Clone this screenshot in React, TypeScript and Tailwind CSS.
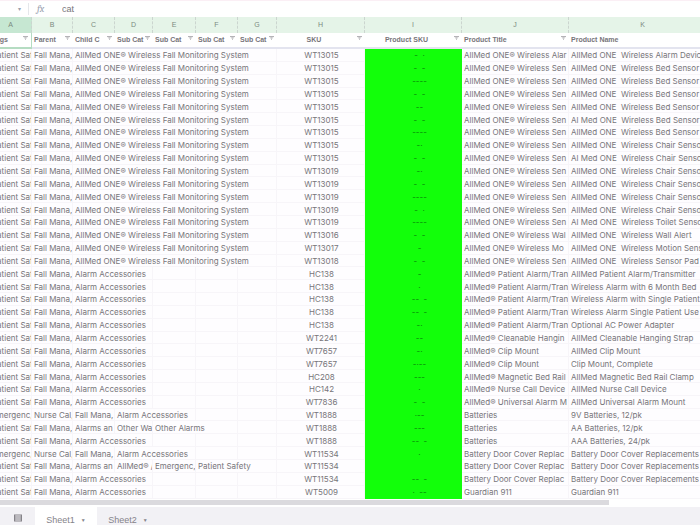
import clsx from 'clsx';

type Cell = { text: string; span?: number };

type Row = {
  cells: Cell[];
  sku: string;
  mark: string;
  title: string;
  name: string;
};

const SAFETY: Cell = { text: 'Patient Saf' };
const FALL: Cell = { text: 'Fall Mana,' };

const SYSTEM: Cell[] = [SAFETY, FALL, { text: 'AllMed ONE® Wireless Fall Monitoring System', span: 5 }];
const ACCESSORY: Cell[] = [SAFETY, FALL, { text: 'Alarm Accessories', span: 2 }, { text: '' }, { text: '' }, { text: '' }];
const EMERGENCY: Cell[] = [
  { text: 'Emergenc,' },
  { text: 'Nurse Cal,' },
  FALL,
  { text: 'Alarm Accessories', span: 2 },
  { text: '' },
  { text: '' },
];
const OTHER: Cell[] = [
  SAFETY,
  FALL,
  { text: 'Alarms an' },
  { text: 'Other War' },
  { text: 'Other Alarms', span: 2 },
  { text: '' },
];
const PATIENT: Cell[] = [
  SAFETY,
  FALL,
  { text: 'Alarms an' },
  { text: 'AllMed® /' },
  { text: 'Emergenc,' },
  { text: 'Patient Safety', span: 2 },
];

const row = (cells: Cell[], sku: string, mark: string, title: string, name: string): Row => ({
  cells,
  sku,
  mark,
  title,
  name,
});

const SENSOR = 'AllMed ONE® Wireless Sen';
const TRANSMITTER = 'AllMed® Patient Alarm/Tran';
const BATTERY_DOOR = 'Battery Door Cover Replac';

const rows: Row[] = [
  row(SYSTEM, 'WT13015', '-  ·', 'AllMed ONE® Wireless Alar', 'AllMed ONE  Wireless Alarm Device'),
  row(SYSTEM, 'WT13015', '-  -', SENSOR, 'AllMed ONE  Wireless Bed Sensor'),
  row(SYSTEM, 'WT13015', '----', SENSOR, 'AllMed ONE  Wireless Bed Sensor'),
  row(SYSTEM, 'WT13015', '-  -', SENSOR, 'AllMed ONE  Wireless Bed Sensor'),
  row(SYSTEM, 'WT13015', '--', SENSOR, 'AllMed ONE  Wireless Bed Sensor'),
  row(SYSTEM, 'WT13015', '-  -', SENSOR, 'Al Med ONE  Wireless Bed Sensor'),
  row(SYSTEM, 'WT13015', '----', SENSOR, 'AllMed ONE  Wireless Bed Sensor'),
  row(SYSTEM, 'WT13015', '-·', SENSOR, 'AllMed ONE  Wireless Chair Sensor'),
  row(SYSTEM, 'WT13015', '-  -', SENSOR, 'Al Med ONE  Wireless Chair Sensor'),
  row(SYSTEM, 'WT13019', '-·', SENSOR, 'AllMed ONE  Wireless Chair Sensor'),
  row(SYSTEM, 'WT13019', '-  -', SENSOR, 'AllMed ONE  Wireless Chair Sensor'),
  row(SYSTEM, 'WT13019', '----', SENSOR, 'AllMed ONE  Wireless Chair Sensor'),
  row(SYSTEM, 'WT13019', '-  ·', SENSOR, 'AllMed ONE  Wireless Chair Sensor'),
  row(SYSTEM, 'WT13019', '----', SENSOR, 'Al Med ONE  Wireless Toilet Sensor'),
  row(SYSTEM, 'WT13016', '-  -', 'AllMed ONE® Wireless Wal', 'AllMed ONE  Wireless Wall Alert'),
  row(SYSTEM, 'WT13017', '-', 'AllMed ONE® Wireless Mo', 'AllMed ONE  Wireless Motion Sensor'),
  row(SYSTEM, 'WT13018', '-  -', SENSOR, 'AllMed ONE  Wireless Sensor Pad'),
  row(ACCESSORY, 'HC138', '-', TRANSMITTER, 'AllMed Patient Alarm/Transmitter'),
  row(ACCESSORY, 'HC138', '·', TRANSMITTER, 'Wireless Alarm with 6 Month Bed'),
  row(ACCESSORY, 'HC138', '--  -', TRANSMITTER, 'Wireless Alarm with Single Patient'),
  row(ACCESSORY, 'HC138', '--  -', TRANSMITTER, 'Wireless Alarm Single Patient Use'),
  row(ACCESSORY, 'HC138', '-·', TRANSMITTER, 'Optional AC Power Adapter'),
  row(ACCESSORY, 'WT2241', '--', 'AllMed® Cleanable Hangin', 'AllMed Cleanable Hanging Strap'),
  row(ACCESSORY, 'WT7657', '-·', 'AllMed® Clip Mount', 'AllMed Clip Mount'),
  row(ACCESSORY, 'WT7657', '-·--', 'AllMed® Clip Mount', 'Clip Mount, Complete'),
  row(ACCESSORY, 'HC208', '---', 'AllMed® Magnetic Bed Rail', 'AllMed Magnetic Bed Rail Clamp'),
  row(ACCESSORY, 'HC142', '·', 'AllMed® Nurse Call Device', 'AllMed Nurse Call Device'),
  row(ACCESSORY, 'WT7836', '-  -', 'AllMed® Universal Alarm M', 'AllMed Universal Alarm Mount'),
  row(EMERGENCY, 'WT1888', '·--', 'Batteries', '9V Batteries, 12/pk'),
  row(OTHER, 'WT1888', '---', 'Batteries', 'AA Batteries, 12/pk'),
  row(ACCESSORY, 'WT1888', '--  -', 'Batteries', 'AAA Batteries, 24/pk'),
  row(EMERGENCY, 'WT11534', '·', BATTERY_DOOR, 'Battery Door Cover Replacements'),
  row(PATIENT, 'WT11534', '', BATTERY_DOOR, 'Battery Door Cover Replacements'),
  row(ACCESSORY, 'WT11534', '--  -', BATTERY_DOOR, 'Battery Door Cover Replacements'),
  row(ACCESSORY, 'WT5009', '·  --', 'Guardian 911', 'Guardian 911'),
];

const columns = [
  { letter: 'A', label: 'Tags', width: 'w-[42px]' },
  { letter: 'B', label: 'Parent', width: 'w-[41px]' },
  { letter: 'C', label: 'Child C', width: 'w-[42px]' },
  { letter: 'D', label: 'Sub Cat', width: 'w-[38px]' },
  { letter: 'E', label: 'Sub Cat', width: 'w-[43px]' },
  { letter: 'F', label: 'Sub Cat', width: 'w-[42px]' },
  { letter: 'G', label: 'Sub Cat', width: 'w-[39px]' },
  { letter: 'H', label: 'SKU', width: 'w-[88px]', center: true },
  { letter: 'I', label: 'Product SKU', width: 'w-[97px]', center: true },
  { letter: 'J', label: 'Product Title', width: 'w-[107px]' },
  { letter: 'K', label: 'Product Name', width: 'w-[148px]' },
];

const cellClass = 'overflow-hidden whitespace-pre border-r border-b border-[#f7f5f9] pt-px pr-0 pb-0 pl-0.5';

function FilterIcon() {
  return (
    <svg viewBox="0 0 5 4" className="mb-1 h-1 w-[5px] shrink-0" fill="none" stroke="#a3a1a6" strokeWidth="0.9">
      <path d="M0 0.6h5M1.3 1.9h2.4M2 3.2h1" />
    </svg>
  );
}

function FormulaBar() {
  return (
    <div className="flex h-[17px] shrink-0 items-center border-t border-[#fbeff5] bg-white">
      <span className="w-[28px] pl-[18px] text-[6px] text-gray-400">▾</span>
      <label htmlFor="formula" className="w-[32px] border-l border-gray-200 pl-2 font-serif text-[10px] leading-3 text-gray-400 italic">
        fx
      </label>
      <input
        id="formula"
        defaultValue="cat"
        className="min-w-0 flex-1 bg-transparent pl-0.5 text-[9px] leading-3 text-[#77757a] outline-none"
      />
    </div>
  );
}

function SheetTable() {
  return (
    <table className="-ml-2.5 h-full w-[727px] min-w-[calc(100%+10px)] table-fixed border-separate border-spacing-0">
      <colgroup>
        {columns.map((c) => (
          <col key={c.letter} className={c.width} />
        ))}
      </colgroup>
      <thead>
        <tr className="h-4">
          {columns.map((c, i) => (
            <th
              key={c.letter}
              className={clsx(
                'border-r border-dashed border-[#cbd5cf] p-0 text-[7px] leading-3 font-medium text-[#7b8a80]',
                i === 0 ? 'bg-[#c6e7d2]' : 'bg-[#e5f4e8]',
              )}
            >
              {c.letter}
            </th>
          ))}
        </tr>
        <tr className="h-4">
          {columns.map((c, i) => (
            <th
              key={c.letter}
              className={clsx(
                'border-b-2 bg-white p-0 text-[7px] leading-3 font-bold text-[#77757a]',
                i === 0 ? 'border-r border-[#b5dcc2]' : 'border-[#e3e4ef]',
              )}
            >
              <div className="flex items-center overflow-hidden pr-[3px] pl-0.5 whitespace-nowrap">
                <span className={clsx('min-w-0 flex-1', c.center ? 'pr-2 text-center' : 'text-left')}>{c.label}</span>
                <FilterIcon />
              </div>
            </th>
          ))}
        </tr>
      </thead>
      <tbody className="font-[Inter,sans-serif]">
        {rows.map((r, i) => (
          <tr key={i}>
            {r.cells.map((c, j) => (
              <td key={j} colSpan={c.span} className={cellClass}>
                {c.text}
              </td>
            ))}
            <td className={clsx(cellClass, 'text-center')}>{r.sku}</td>
            <td className="overflow-hidden bg-[#12ff0a] p-0 pl-3 text-center whitespace-pre text-[#078508]">{r.mark}</td>
            <td className={cellClass}>{r.title}</td>
            <td className={cellClass}>{r.name}</td>
          </tr>
        ))}
      </tbody>
    </table>
  );
}

function SheetTabs() {
  return (
    <div className="flex h-[18px] shrink-0 items-stretch bg-[#f2f1f5] text-[9px] leading-3 text-[#858389]">
      <button aria-label="All sheets" className="flex w-[35px] items-center justify-center pt-1">
        <svg viewBox="0 0 8 8" className="h-2 w-2" fill="none" stroke="#858389" strokeWidth="1.2">
          <path d="M0 1h8M0 3h8M0 5h8M0 7h8M0.6 1v6M7.4 1v6" />
        </svg>
      </button>
      <button className="flex w-[62px] items-center justify-center gap-1.5 bg-white pt-2">
        Sheet1 <span className="text-[5px]">▼</span>
      </button>
      <button className="flex w-[62px] items-center justify-center gap-1.5 pt-2">
        Sheet2 <span className="text-[5px]">▼</span>
      </button>
    </div>
  );
}

export default function App() {
  return (
    <div className="flex h-screen flex-col overflow-hidden bg-[#fefdff] font-['Liberation_Sans',Arial,sans-serif] text-[8px] leading-[10px] text-[#77757a]">
      <FormulaBar />
      <main className="min-h-0 flex-1 overflow-hidden">
        <SheetTable />
      </main>
      <div className="h-2 shrink-0 bg-white pt-px">
        <div className="h-[5px] w-[87%] bg-[#dbdade]" />
      </div>
      <SheetTabs />
    </div>
  );
}
